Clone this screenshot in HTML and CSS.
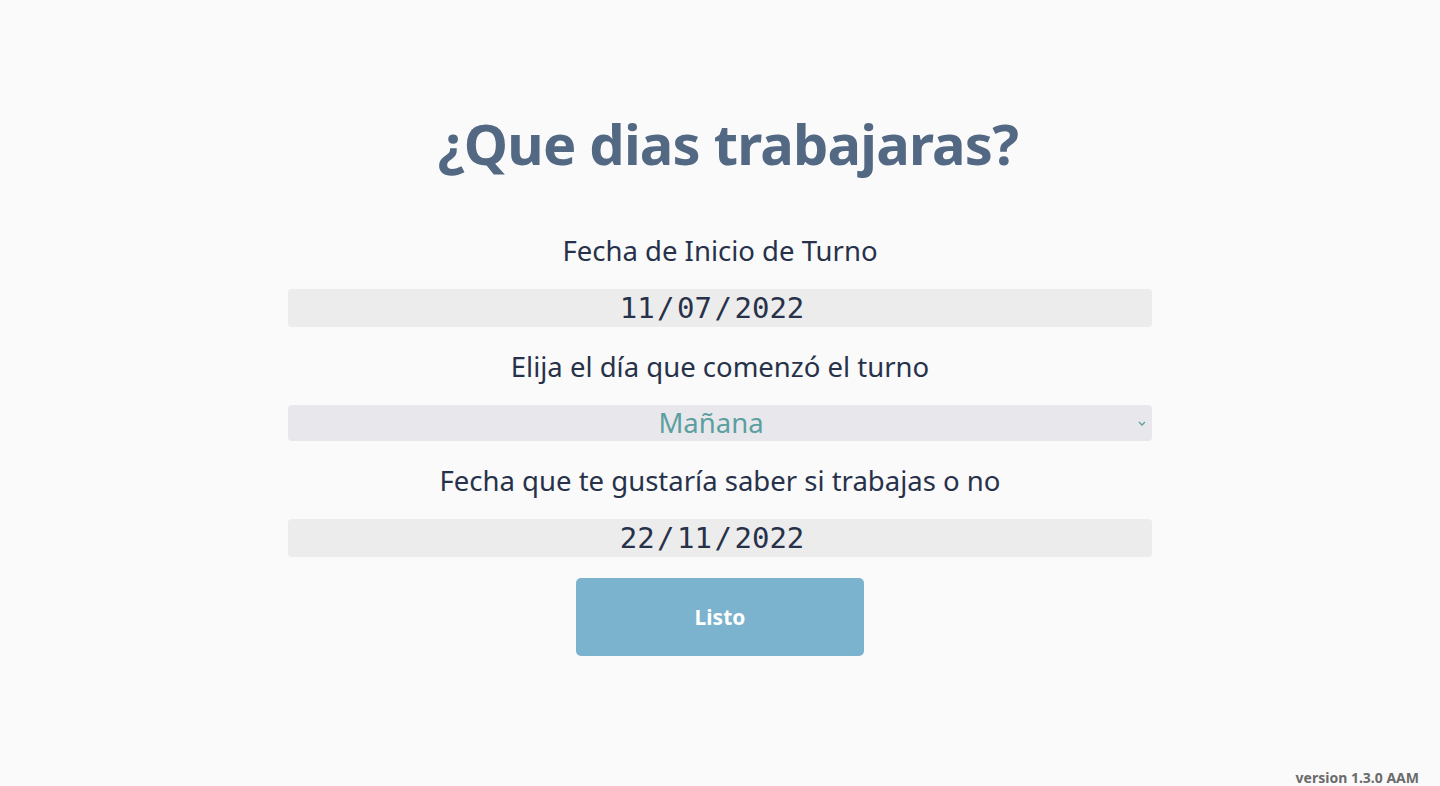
FILE: index.html
```html
<!DOCTYPE html>
<html lang="es">
<head>
<meta charset="utf-8">
<title>¿Que dias trabajaras?</title>
<link rel="stylesheet" href="styles.css">
</head>
<body>
<main class="page">
  <h1 class="title">¿Que dias trabajaras?</h1>
  <form class="form">
    <label class="label" for="inicio">Fecha de Inicio de Turno</label>
    <div class="field field-date" id="inicio"><span>11</span><span class="sep">/</span><span>07</span><span class="sep">/</span><span>2022</span></div>
    <label class="label label-gap" for="turno">Elija el día que comenzó el turno</label>
    <div class="select-wrap">
      <div class="field field-select" id="turno">Mañana</div>
      <svg class="chevron" width="8" height="5" viewBox="0 0 8 5"><path d="M1 1l3 3 3-3" fill="none" stroke="#5a9fa0" stroke-width="1.3"/></svg>
    </div>
    <label class="label label-gap" for="consulta">Fecha que te gustaría saber si trabajas o no</label>
    <div class="field field-date" id="consulta"><span>22</span><span class="sep">/</span><span>11</span><span class="sep">/</span><span>2022</span></div>
    <button type="button" class="button">Listo</button>
  </form>
</main>
<footer class="version">version 1.3.0 AAM</footer>
</body>
</html>
```
FILE: styles.css
```css
html, body {
  margin: 0;
  padding: 0;
  height: 100%;
}
body {
  background: #fafafa;
  font-family: "Noto Sans", "Open Sans", sans-serif;
  color: #27324a;
  position: relative;
  overflow: hidden;
}
.page {
  display: flex;
  flex-direction: column;
  align-items: center;
  padding-top: 110px;
}
.title {
  margin: 0;
  padding-left: 16px;
  font-size: 56px;
  line-height: 67px;
  font-weight: 700;
  color: #536882;
  letter-spacing: -0.8px;
}
.form {
  width: 864px;
  display: flex;
  flex-direction: column;
  align-items: center;
  margin-top: 57px;
}
.label {
  font-size: 27.5px;
  line-height: 34px;
  margin-bottom: 21px;
  color: #27324a;
}
.label-gap {
  margin-top: 23px;
}
.field {
  box-sizing: border-box;
  width: 100%;
  border-radius: 4px;
  text-align: center;
}
.field-date {
  height: 38px;
  padding-right: 16px;
  background: #ececec;
  font-family: "DejaVu Sans Mono", monospace;
  font-size: 29px;
  line-height: 38px;
  color: #27324a;
}
.sep {
  padding: 0 2.5px;
}
.select-wrap {
  position: relative;
  width: 100%;
}
.field-select {
  height: 36px;
  padding-right: 18px;
  background: #e8e8ec;
  font-size: 27.5px;
  line-height: 36px;
  color: #5c9fa0;
}
.chevron {
  position: absolute;
  right: 6px;
  top: 16px;
}
.button {
  margin-top: 21px;
  width: 288px;
  height: 78px;
  border: none;
  border-radius: 5px;
  background: #7bb2cd;
  color: #ffffff;
  font-family: "Noto Sans", "Open Sans", sans-serif;
  font-weight: 700;
  font-size: 21px;
}
.version {
  position: absolute;
  right: 21px;
  bottom: 0;
  font-size: 14px;
  font-weight: 700;
  color: #6b6b6b;
  line-height: 16px;
}
```
